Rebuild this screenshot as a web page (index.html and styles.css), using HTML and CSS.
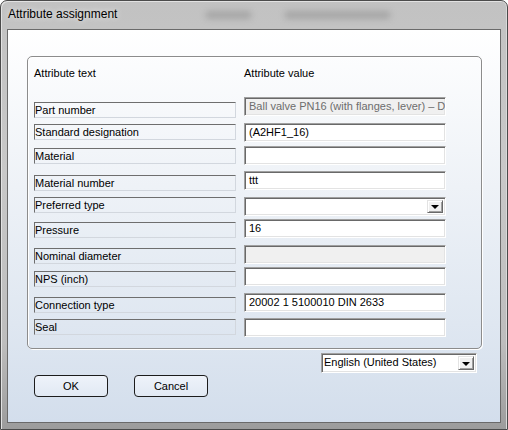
FILE: index.html
```html
<!DOCTYPE html>
<html>
<head>
<meta charset="utf-8">
<link rel="stylesheet" href="styles.css">
</head>
<body>
<div class="window">
  <div class="titlebar">
    <span class="title">Attribute assignment</span>
    <span class="ghost g1"></span>
    <span class="ghost g2"></span>
  </div>
  <div class="client">
    <div class="group">
      <div class="head">
        <span class="hcol">Attribute text</span>
        <span class="hcol">Attribute value</span>
      </div>
      <div class="rows">
        <div class="row h26"><div class="lbl o5">Part number</div><div class="fld dis">Ball valve PN16 (with flanges, lever) – DN</div></div>
        <div class="row h23"><div class="lbl o1">Standard designation</div><div class="fld">(A2HF1_16)</div></div>
        <div class="row h25"><div class="lbl o2">Material</div><div class="fld"></div></div>
        <div class="row h26"><div class="lbl o4">Material number</div><div class="fld">ttt</div></div>
        <div class="row h22"><div class="lbl o0">Preferred type</div><div class="fld combo"><span class="val"></span><span class="drop"><span class="arrow"></span></span></div></div>
        <div class="row h26"><div class="lbl o3">Pressure</div><div class="fld">16</div></div>
        <div class="row h22"><div class="lbl o3">Nominal diameter</div><div class="fld dis"></div></div>
        <div class="row h26"><div class="lbl o4">NPS (inch)</div><div class="fld"></div></div>
        <div class="row h25"><div class="lbl o4">Connection type</div><div class="fld">20002 1 5100010 DIN 2633</div></div>
        <div class="row h20"><div class="lbl o1">Seal</div><div class="fld"></div></div>
      </div>
    </div>
    <div class="langline">
      <div class="fld combo lang"><span class="val">English (United States)</span><span class="drop"><span class="arrow"></span></span></div>
    </div>
    <div class="buttons">
      <div class="btn">OK</div>
      <div class="btn">Cancel</div>
    </div>
  </div>
</div>
</body>
</html>
```
FILE: styles.css
```css
html, body {
  margin: 0;
  padding: 0;
  width: 508px;
  height: 430px;
  background: #ffffff;
  overflow: hidden;
}
.window {
  box-sizing: border-box;
  width: 508px;
  height: 430px;
  border: 1px solid #4b4b4b;
  border-radius: 7px 7px 0 0;
  background: linear-gradient(to bottom, #c2c2c2 0%, #c8c8c8 40%, #bdbdbd 80%, #9c9c9c 100%);
  box-shadow: inset 1px 1px 0 #e2e2e2, inset -1px 0 0 #dadada;
  display: flex;
  flex-direction: column;
  font-family: "Liberation Sans", Arial, sans-serif;
  font-size: 11px;
  color: #000;
}
.titlebar {
  height: 28px;
  position: relative;
  display: flex;
  align-items: center;
  padding-left: 7px;
  padding-bottom: 2px;
  box-sizing: border-box;
}
.title {
  font-size: 12px;
  color: #000;
  text-shadow: 0 0 6px rgba(255,255,255,0.9);
  position: relative;
  z-index: 1;
}
.ghost {
  position: absolute;
  height: 8px;
  top: 10px;
  background: #9a9a9a;
  filter: blur(3px);
  opacity: 0.7;
}
.g1 { left: 205px; width: 45px; }
.g2 { left: 284px; width: 105px; }
.client {
  flex: 1;
  margin: 0 6px 6px 6px;
  border: 1px solid #6a6a6a;
  background: linear-gradient(to bottom, #ffffff 0%, #eef2f7 40%, #dfe7f1 75%, #d3deec 100%);
  display: flex;
  flex-direction: column;
}
.group {
  box-sizing: border-box;
  margin: 26px 0 0 19px;
  width: 455px;
  height: 293px;
  border: 1px solid #8c8c8c;
  border-radius: 5px;
  box-shadow: inset 1px 1px 0 #ffffff, 1px 1px 0 #ffffff;
  padding: 10px 0 0 6px;
}
.head {
  display: grid;
  grid-template-columns: 210px 202px;
  height: 13px;
  line-height: 13px;
}
.rows {
  margin-top: 17px;
  display: flex;
  flex-direction: column;
}
.row {
  display: grid;
  grid-template-columns: 202px 202px;
  column-gap: 8px;
  align-items: start;
}
.h20 { height: 20px; }
.h22 { height: 22px; }
.h23 { height: 23px; }
.h25 { height: 25px; }
.h26 { height: 26px; }
.o0 { margin-top: 0; }
.o1 { margin-top: 1px; }
.o2 { margin-top: 2px; }
.o3 { margin-top: 3px; }
.o4 { margin-top: 4px; }
.o5 { margin-top: 5px; }
.lbl {
  box-sizing: border-box;
  height: 16px;
  line-height: 15px;
  border-top: 1px solid #6e6e6e;
  border-left: 1px solid #6e6e6e;
  border-right: 1px solid #d2d7de;
  border-bottom: 1px solid #d2d7de;
  padding-left: 0;
  white-space: nowrap;
  overflow: hidden;
}
.fld {
  box-sizing: border-box;
  height: 19px;
  line-height: 16px;
  background: #ffffff;
  border-top: 1px solid #a0a0a0;
  border-left: 1px solid #a0a0a0;
  border-right: 1px solid #ffffff;
  border-bottom: 1px solid #ffffff;
  box-shadow: inset 1px 1px 0 #696969, inset -1px -1px 0 #e3e3e3;
  padding: 0 0 0 4px;
  white-space: nowrap;
  overflow: hidden;
}
.fld.dis {
  background: #f0f0f0;
  color: #6d6d6d;
}
.combo {
  display: flex;
  align-items: stretch;
  padding: 2px 2px 2px 4px;
  line-height: 13px;
}
.combo .val {
  flex: 1;
  white-space: nowrap;
  overflow: hidden;
}
.drop {
  width: 16px;
  box-sizing: border-box;
  background: #f0f0f0;
  border-top: 1px solid #e3e3e3;
  border-left: 1px solid #e3e3e3;
  border-right: 1px solid #696969;
  border-bottom: 1px solid #696969;
  box-shadow: inset 1px 1px 0 #ffffff, inset -1px -1px 0 #a0a0a0;
  display: flex;
  align-items: center;
  justify-content: center;
}
.arrow {
  width: 0;
  height: 0;
  border-left: 4px solid transparent;
  border-right: 4px solid transparent;
  border-top: 4px solid #000;
  margin-top: 1px;
}
.langline {
  display: flex;
  justify-content: flex-end;
  margin: 4px 23px 0 0;
}
.lang {
  width: 156px;
  height: 20px;
  padding-left: 2px;
}
.buttons {
  display: flex;
  gap: 26px;
  margin: 2px 0 0 26px;
}
.btn {
  box-sizing: border-box;
  width: 74px;
  height: 22px;
  border: 1px solid #1c1c1c;
  border-radius: 4px;
  background: linear-gradient(to bottom, #eef3fa 0%, #e1e9f3 100%);
  display: flex;
  align-items: center;
  justify-content: center;
}
```
